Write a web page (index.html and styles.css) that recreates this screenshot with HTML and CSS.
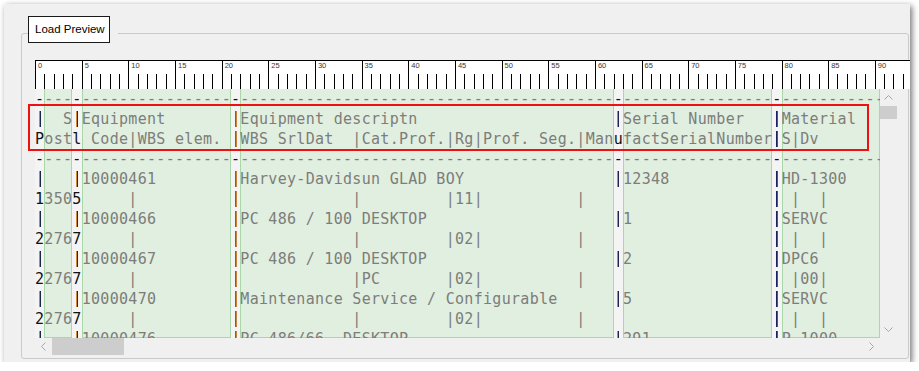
FILE: index.html
```html
<!DOCTYPE html>
<html>
<head>
<meta charset="utf-8">
<title>Load Preview</title>
<link rel="stylesheet" href="styles.css">
</head>
<body>
<div class="window">
  <div class="tab">Load Preview</div>
  <div class="group">
    <div class="ruler">
      <div class="major"><span class="num">0</span><div class="ticks"><i></i><i></i><i></i><i></i></div></div>
      <div class="major"><span class="num">5</span><div class="ticks"><i></i><i></i><i></i><i></i></div></div>
      <div class="major"><span class="num">10</span><div class="ticks"><i></i><i></i><i></i><i></i></div></div>
      <div class="major"><span class="num">15</span><div class="ticks"><i></i><i></i><i></i><i></i></div></div>
      <div class="major"><span class="num">20</span><div class="ticks"><i></i><i></i><i></i><i></i></div></div>
      <div class="major"><span class="num">25</span><div class="ticks"><i></i><i></i><i></i><i></i></div></div>
      <div class="major"><span class="num">30</span><div class="ticks"><i></i><i></i><i></i><i></i></div></div>
      <div class="major"><span class="num">35</span><div class="ticks"><i></i><i></i><i></i><i></i></div></div>
      <div class="major"><span class="num">40</span><div class="ticks"><i></i><i></i><i></i><i></i></div></div>
      <div class="major"><span class="num">45</span><div class="ticks"><i></i><i></i><i></i><i></i></div></div>
      <div class="major"><span class="num">50</span><div class="ticks"><i></i><i></i><i></i><i></i></div></div>
      <div class="major"><span class="num">55</span><div class="ticks"><i></i><i></i><i></i><i></i></div></div>
      <div class="major"><span class="num">60</span><div class="ticks"><i></i><i></i><i></i><i></i></div></div>
      <div class="major"><span class="num">65</span><div class="ticks"><i></i><i></i><i></i><i></i></div></div>
      <div class="major"><span class="num">70</span><div class="ticks"><i></i><i></i><i></i><i></i></div></div>
      <div class="major"><span class="num">75</span><div class="ticks"><i></i><i></i><i></i><i></i></div></div>
      <div class="major"><span class="num">80</span><div class="ticks"><i></i><i></i><i></i><i></i></div></div>
      <div class="major"><span class="num">85</span><div class="ticks"><i></i><i></i><i></i><i></i></div></div>
      <div class="major"><span class="num">90</span><div class="ticks"><i></i><i></i><i></i><i></i></div></div>
    </div>
    <div class="panel">
      <div class="list">
<pre class="col sep">-
<i class="bar k"></i>
P
-
<i class="bar k"></i>
1
<i class="bar k"></i>
2
<i class="bar k"></i>
2
<i class="bar k"></i>
2
<i class="bar k"></i></pre>
<pre class="col g w3">---
  S
ost
---

350

276

276

276
</pre>
<pre class="col sep">-
<i class="bar k"></i>
l
-
<i class="bar k"></i>
5
<i class="bar k"></i>
7
<i class="bar k"></i>
7
<i class="bar k"></i>
7
<i class="bar k"></i></pre>
<pre class="col g w16">----------------
Equipment
 Code|WBS elem.
----------------
10000461
     |
10000466
     |
10000467
     |
10000470
     |
10000476</pre>
<pre class="col sep">-
<i class="bar bo"></i>
<i class="bar bo"></i>
-
<i class="bar bo"></i>
<i class="bar bo"></i>
<i class="bar bo"></i>
<i class="bar bo"></i>
<i class="bar bo"></i>
<i class="bar bo"></i>
<i class="bar bo"></i>
<i class="bar bo"></i>
<i class="bar bo"></i></pre>
<pre class="col g w40">----------------------------------------
Equipment descriptn
WBS SrlDat  |Cat.Prof.|Rg|Prof. Seg.|Man
----------------------------------------
Harvey-Davidsun GLAD BOY
            |         |11|          |
PC 486 / 100 DESKTOP
            |         |02|          |
PC 486 / 100 DESKTOP
            |PC       |02|          |
Maintenance Service / Configurable
            |         |02|          |
PC 486/66  DESKTOP</pre>
<pre class="col sep">-
<i class="bar k"></i>
u
-
<i class="bar k"></i>

<i class="bar k"></i>

<i class="bar k"></i>

<i class="bar k"></i>

<i class="bar k"></i></pre>
<pre class="col g w16">----------------
Serial Number
factSerialNumber
----------------
12348

1

2

5

291</pre>
<pre class="col sep">-
<i class="bar nb"></i>
<i class="bar nb"></i>
-
<i class="bar nb"></i>
<i class="bar nb"></i>
<i class="bar nb"></i>
<i class="bar nb"></i>
<i class="bar nb"></i>
<i class="bar nb"></i>
<i class="bar nb"></i>
<i class="bar nb"></i>
<i class="bar nb"></i></pre>
<pre class="col g wrest">------------
Material
S|Dv
------------
HD-1300
 |  |
SERVC
 |  |
DPC6
 |00|
SERVC
 |  |
P-1000</pre>
      </div>
      <div class="vscroll">
        <div class="arrow"><svg width="9" height="5" viewBox="0 0 9 5"><polyline points="0.5,4.5 4.5,0.5 8.5,4.5" fill="none" stroke="#a6a6a6" stroke-width="1"/></svg></div>
        <div class="vthumb"></div>
        <div class="track"></div>
        <div class="arrow"><svg width="9" height="5" viewBox="0 0 9 5"><polyline points="0.5,0.5 4.5,4.5 8.5,0.5" fill="none" stroke="#a6a6a6" stroke-width="1"/></svg></div>
      </div>
      <div class="hscroll">
        <div class="arrow"><svg width="5" height="9" viewBox="0 0 5 9"><polyline points="4.5,0.5 0.5,4.5 4.5,8.5" fill="none" stroke="#a6a6a6" stroke-width="1"/></svg></div>
        <div class="hthumb"></div>
        <div class="track"></div>
        <div class="arrow"><svg width="5" height="9" viewBox="0 0 5 9"><polyline points="0.5,0.5 4.5,4.5 0.5,8.5" fill="none" stroke="#a6a6a6" stroke-width="1"/></svg></div>
      </div>
      <div class="corner"></div>
    </div>
    <div class="highlight"></div>
  </div>
</div>
</body>
</html>
```
FILE: styles.css
```css
html, body {
  margin: 0;
  padding: 0;
  background: #ffffff;
}

.window {
  margin: 4px 0 0 4px;
  width: 906px;
  height: 358px;
  box-sizing: border-box;
  background: #f0f0f0;
  box-shadow: 2px 2px 6px rgba(0, 0, 0, 0.55);
  overflow: hidden;
  padding: 12px 0 0 17px;
}

.tab {
  position: relative;
  z-index: 2;
  margin-left: 7px;
  width: 82px;
  height: 27px;
  box-sizing: border-box;
  border: 1px solid #1a1a1a;
  background: #ffffff;
  box-shadow: 8px 0 0 #f0f0f0;
  font-family: "Liberation Sans", Arial, sans-serif;
  font-size: 11.5px;
  line-height: 23px;
  padding: 1px 0 0 6px;
  color: #000;
  white-space: nowrap;
}

.group {
  position: relative;
  margin-top: -10px;
  width: 888px;
  height: 326px;
  box-sizing: border-box;
  border: 1px solid #cacaca;
  border-radius: 3px;
  padding: 26px 0 0 13px;
}

/* ruler */
.ruler {
  display: flex;
  width: 875px;
  height: 29px;
  box-sizing: border-box;
  border-top: 1px solid #000;
  background: #ffffff;
  overflow: hidden;
}

.major {
  flex: none;
  width: 46.6667px;
  height: 100%;
  box-sizing: border-box;
  border-left: 1px solid #000;
  display: flex;
  flex-direction: column;
}

.num {
  display: block;
  height: 9px;
  padding-left: 2px;
  font-family: "Liberation Sans", Arial, sans-serif;
  font-size: 7.5px;
  line-height: 9px;
  color: #3b3530;
}

.ticks {
  margin-top: auto;
  height: 15px;
  display: flex;
  padding-left: 8.3333px;
}

.ticks i {
  flex: none;
  width: 9.3333px;
  height: 15px;
  box-sizing: border-box;
  border-left: 1px solid #000;
}

/* list panel */
.panel {
  display: grid;
  grid-template-columns: 845px 17px;
  grid-template-rows: 249px 17px;
}

.list {
  display: flex;
  height: 249px;
  overflow: hidden;
  font-family: "DejaVu Sans Mono", "Liberation Mono", monospace;
  font-size: 15px;
  letter-spacing: 0.3025px;
  line-height: 20px;
  color: #7d7d79;
}

.col {
  margin: 0;
  flex: none;
  height: 249px;
  overflow: hidden;
  font: inherit;
  white-space: pre;
}

.g {
  background: #e1efe1;
  box-shadow: inset 1px 0 #a9d7a9, inset -1px 0 #a9d7a9, inset 0 -1px #a9d7a9;
}

.sep {
  width: 9.3333px;
  background: #f4f4f4;
  color: #111111;
}

.w3 { width: 28px; }
.w16 { width: 149.3333px; }
.w40 { width: 373.3333px; }
.wrest { flex: 1; min-width: 0; }

.bar {
  display: inline-block;
  vertical-align: top;
  width: 2px;
  height: 16px;
  margin: 2px 0 0 3.6667px;
}

.bar.k { background: linear-gradient(90deg, #d08a32 0 1px, #1c2450 1px 2px); }
.bar.bo { background: linear-gradient(90deg, #3470b0 0 1px, #c9843c 1px 2px); }
.bar.nb { background: linear-gradient(90deg, #1b2260 0 1px, #3558a8 1px 2px); }

/* scrollbars */
.vscroll {
  display: flex;
  flex-direction: column;
  background: #f0f0f0;
}

.hscroll {
  display: flex;
  background: #f0f0f0;
}

.arrow {
  flex: none;
  width: 17px;
  height: 17px;
  display: flex;
  align-items: center;
  justify-content: center;
}

.track {
  flex: 1;
}

.vthumb {
  flex: none;
  height: 13px;
  background: #cdcdcd;
}

.hthumb {
  flex: none;
  width: 72px;
  background: #cdcdcd;
}

.corner {
  background: #f0f0f0;
}

/* red highlight frame over the header rows */
.highlight {
  position: absolute;
  left: 6px;
  top: 70px;
  width: 841px;
  height: 47px;
  box-sizing: border-box;
  border: 2px solid #ee1111;
}
```
